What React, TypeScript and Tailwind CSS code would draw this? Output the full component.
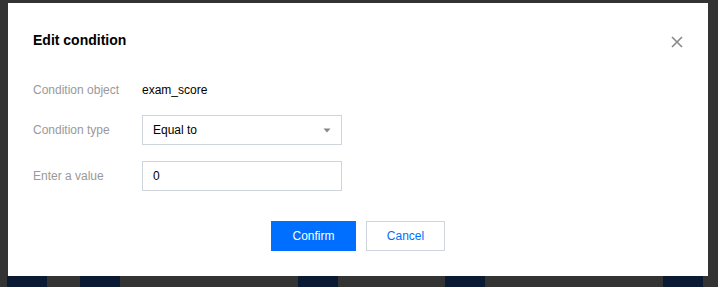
import React from "react";

export default function App() {
  const blocks = [
    { ml: 0, w: 40 },
    { ml: 33, w: 40 },
    { ml: 178, w: 40 },
    { ml: 107, w: 40 },
    { ml: 178, w: 40 },
  ];
  return (
    <div
      className="w-[718px] h-[287px] bg-[#333333] flex flex-col overflow-hidden"
      style={{ fontFamily: '"Liberation Sans", Arial, sans-serif' }}
    >
      <div className="mt-[3px] ml-[8px] w-[700px] h-[273px] bg-white flex flex-col pl-[25px] pr-[25px] pt-[24px]">
        <div className="flex items-center justify-between h-[26px]">
          <div className="text-[14px] font-bold text-[#000] leading-none">Edit condition</div>
          <svg width="12" height="12" viewBox="0 0 12 12" className="mt-[3px]">
            <path d="M1 1 L11 11 M11 1 L1 11" stroke="#888" strokeWidth="1.6" fill="none" />
          </svg>
        </div>
        <div className="flex items-center h-[30px] mt-[22px] text-[12px]">
          <div className="w-[109px] text-[#999]">Condition object</div>
          <div className="text-[#000]">exam_score</div>
        </div>
        <div className="flex items-center h-[30px] mt-[10px] text-[12px]">
          <div className="w-[109px] text-[#999]">Condition type</div>
          <div className="w-[200px] h-[30px] border border-[#d0d4dc] flex items-center justify-between pl-[10px] pr-[10px] text-[#000]">
            <span>Equal to</span>
            <svg width="8" height="5" viewBox="0 0 8 5">
              <path d="M0.5 0.5 L7.5 0.5 L4 4.5 Z" fill="#888" />
            </svg>
          </div>
        </div>
        <div className="flex items-center h-[30px] mt-[16px] text-[12px]">
          <div className="w-[109px] text-[#999]">Enter a value</div>
          <div className="w-[200px] h-[30px] border border-[#d0d4dc] flex items-center pl-[10px] text-[#000]">
            0
          </div>
        </div>
        <div className="flex justify-center gap-[10px] mt-[30px] text-[12px]">
          <div className="w-[85px] h-[30px] bg-[#006eff] text-white flex items-center justify-center">
            Confirm
          </div>
          <div className="w-[79px] h-[30px] border border-[#cfd5de] text-[#006eff] flex items-center justify-center">
            Cancel
          </div>
        </div>
      </div>
      <div className="flex h-[11px] ml-[7px]">
        {blocks.map((b, i) => (
          <div key={i} className="h-full bg-[#0b1a33]" style={{ marginLeft: b.ml, width: b.w }} />
        ))}
      </div>
    </div>
  );
}
